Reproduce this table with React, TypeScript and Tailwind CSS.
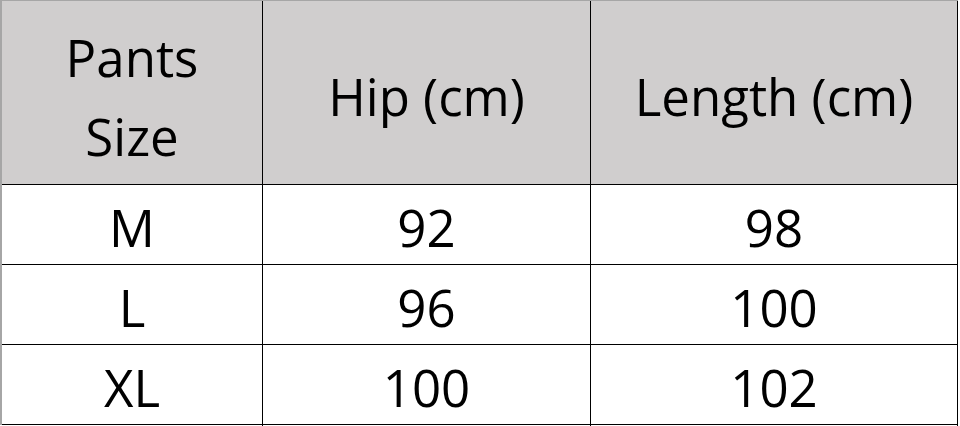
import React from "react";

const rows = [
  ["M", "92", "98"],
  ["L", "96", "100"],
  ["XL", "100", "102"],
];

export default function App() {
  return (
    <div className="w-[960px] h-[426px] bg-white" style={{ fontFamily: '"Open Sans", "Noto Sans", sans-serif' }}>
      <div className="w-[958px] border-l-2 border-t border-l-[#a6a6a6] border-t-[#a6a6a6] text-[51px] text-black">
        <div className="grid grid-cols-[261px_328px_367px] h-[184px] bg-[#d0cece] border-b border-black">
          <div className="flex items-center justify-center border-r border-black text-center leading-[79px] pt-[8px]">
            <div>
              Pants
              <br />
              Size
            </div>
          </div>
          <div className="flex items-center justify-center border-r border-black pt-[8px]">Hip (cm)</div>
          <div className="flex items-center justify-center border-r border-black pt-[8px]">Length (cm)</div>
        </div>
        {rows.map((r, i) => (
          <div key={i} className="grid grid-cols-[261px_328px_367px] h-[80px] border-b border-black">
            {r.map((c, j) => (
              <div key={j} className="flex items-center justify-center border-r border-black pt-[4px]">
                {c}
              </div>
            ))}
          </div>
        ))}
      </div>
    </div>
  );
}
